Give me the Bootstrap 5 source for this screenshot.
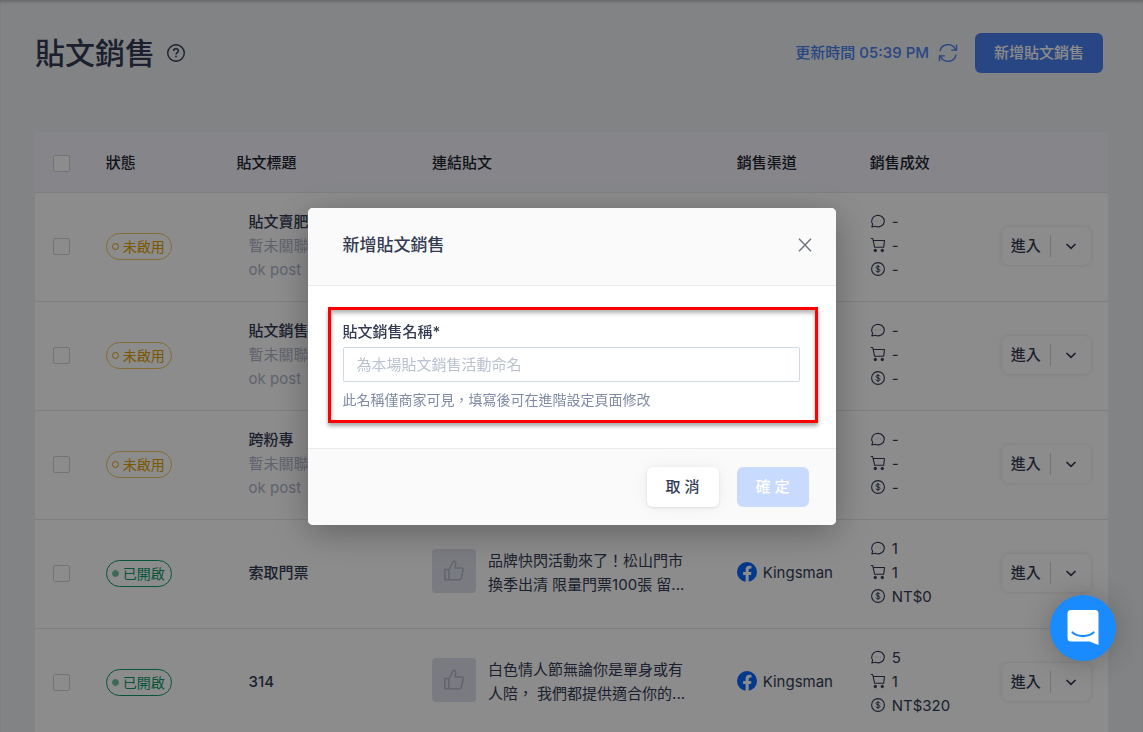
<!DOCTYPE html>
<html lang="zh-Hant">
<head>
<meta charset="utf-8">
<meta name="viewport" content="width=device-width, initial-scale=1">
<title>貼文銷售</title>
<link href="https://cdn.jsdelivr.net/npm/bootstrap@5.3.0/dist/css/bootstrap.min.css" rel="stylesheet">
<style>
  :root { --ink: #343b54; --line: #e6e8ec; --brand: #4a80ee; }
  body { font-family: Inter, "Noto Sans CJK TC", sans-serif; font-size: 15px; line-height: 24px; color: var(--ink); background: #edeef2; }
  button, input { font-family: inherit; }
  .app-page { padding: 0 35px; box-shadow: inset 0 3px 3px -1px rgba(0,0,0,.2); }
  .page-head { padding: 33px 5px 59px 0; }
  .page-title { font-size: 30px; line-height: 40px; font-weight: 500; }
  .title-group { gap: 11px; }
  .icon-btn { padding: 0; border: 0; background: none; line-height: 0; color: inherit; }
  .updated { color: var(--brand); font-weight: 500; }
  .btn { --bs-btn-font-size: 15px; --bs-btn-border-radius: 6px; line-height: 24px; }
  .btn-brand { --bs-btn-color: #fff; --bs-btn-bg: var(--brand); --bs-btn-disabled-color: #fff; --bs-btn-disabled-bg: #c8dbff; --bs-btn-disabled-opacity: 1; --bs-btn-padding-x: 19px; height: 40px; border: 0; font-weight: 500; }
  .sales-table { table-layout: fixed; --bs-table-bg: #fff; --bs-table-color: var(--ink); --bs-table-border-color: var(--line); }
  .sales-table > :not(caption) > * > * { padding: 17px 16px 19px; }
  .sales-table > :not(caption) > * > :first-child { padding-left: 18px; }
  .sales-table thead { vertical-align: middle; }
  .sales-table > thead > tr > th { --bs-table-bg: #f4f5fc; padding-top: 19px; padding-bottom: 17px; font-weight: 500; color: #20242f; }
  .sales-table > tbody > tr > .name-cell { padding-left: 28px; white-space: nowrap; font-weight: 500; }
  .name-cell .sub { color: #afb4c8; font-weight: 400; }
  .form-check-input.pick { display: block; width: 17px; height: 17px; margin: 0; border: 1px solid #d2d2d2; border-radius: 2px; }
  .state { display: inline-flex; align-items: center; gap: 4px; padding: 0 6px 0 5px; border: 1px solid; border-radius: 14px; font-size: 14px; line-height: 25px; vertical-align: middle; white-space: nowrap; }
  .state::before { content: ""; width: 7px; height: 7px; border: 1px solid; border-radius: 50%; }
  .state-off { color: #dfa000; border-color: #edc664; }
  .state-on { color: #0d9a6c; }
  .state-on::before { background: #6fc4a5; border-color: #6fc4a5; }
  .thumb { width: 44px; height: 44px; background: #dfe1ea; border-radius: 4px; color: #b4b9c9; }
  .stat { display: flex; align-items: center; gap: 6px; }
  .stat svg { margin-bottom: 2px; }
  .enter-group { height: 38px; border-radius: 7px; background: #fff; box-shadow: 0 0 4px rgba(0,0,0,.13); }
  .enter-group .btn { border: 0; padding: 0 9px; font-weight: 500; color: var(--ink); }
  .enter-group .split { height: 22px; border-left: 1px solid #d3d5db; }
  .enter-group .btn-more { padding: 0 14px; line-height: 0; }
  .modal-backdrop { --bs-backdrop-opacity: .45; }
  .modal-dialog { --bs-modal-width: 528px; }
  .modal-content { border: 0; border-radius: 5px; color: var(--ink); box-shadow: 0 8px 36px rgba(0,0,0,.3); }
  .modal-header { padding: 24px 24px 27px 35px; background: #fafafa; border-color: #ececee; border-radius: 5px 5px 0 0; }
  .modal-title { font-size: 17px; line-height: 26px; font-weight: 500; }
  .modal-body { padding: 21px 18px 25px 20px; }
  .modal-footer { padding: 18px 27px; gap: 18px; background: #fafafa; border-color: #ececee; border-radius: 0 0 5px 5px; }
  .modal-footer > * { margin: 0; }
  .modal-footer .btn { width: 72px; height: 40px; padding: 0; border: 0; font-weight: 500; }
  .btn-cancel { background: #fff; color: var(--ink); box-shadow: 0 1px 3px rgba(0,0,0,.1), 0 0 18px rgba(0,0,0,.05); }
  .callout { padding: 10px 15px 9px 12px; border: 3px solid #f00; box-shadow: 0 3px 4px rgba(0,0,0,.35), inset 0 3px 4px rgba(0,0,0,.3); }
  .callout .form-label { display: block; margin: 0 0 3px; font-weight: 500; }
  .callout .form-control { height: 35px; padding: 0 13px; font-size: 15px; border: 1px solid #cfdae4; border-radius: 2px; }
  .callout .form-control::placeholder { color: #bbc1d1; }
  .callout .form-text { margin-top: 7px; font-size: 14px; line-height: 22px; color: #818ba5; }
  .launcher { position: fixed; right: 27px; bottom: 71px; z-index: 1100; width: 66px; height: 66px; border: 0; border-radius: 50%; background: #1a8bff; box-shadow: 0 2px 28px rgba(0,0,0,.22); }
  svg { flex: none; fill: none; stroke: currentColor; }
</style>
</head>
<body class="modal-open vh-100 overflow-hidden">

<svg width="0" height="0" class="position-absolute" aria-hidden="true">
  <symbol id="i-chat" viewBox="0 0 16 16"><path d="M1.800 14 2.700 11.200A6.300 5.700 0 1 1 5.400 13.300Z" stroke-width="1.100" stroke-linejoin="round"/><path d="M5.200 8h.6M7.700 8h.6M10.200 8h.6" stroke-width=".6" opacity=".7"/></symbol>
  <symbol id="i-cart" viewBox="0 0 16 16"><path d="M.8 1.500h1.900L4.600 10.200H13.700L14.500 3.500H3.200" stroke-width="1.100" stroke-linejoin="round"/><circle cx="5.300" cy="13.500" r="1.200" fill="currentColor"/><circle cx="12.300" cy="13.500" r="1.200" fill="currentColor"/></symbol>
  <symbol id="i-coin" viewBox="0 0 16 16"><circle cx="8" cy="8" r="6.400" stroke-width="1.100"/><path d="M9.900 6.300C9.600 5.500 8.900 5.200 8 5.200c-1.100 0-1.900.5-1.900 1.300C6.100 8.400 10 7.400 10 9.400c0 .9-.9 1.400-2 1.400-1 0-1.800-.4-2.100-1.200M8 4.200v7.600" stroke-width="1"/></symbol>
  <symbol id="i-down" viewBox="0 0 12 12"><path d="m1.500 4 4.500 4.300L10.500 4" stroke-width="1.700"/></symbol>
  <symbol id="i-like" viewBox="0 0 24 24"><path d="M2.800 10.500h4v10.300h-4zM6.800 11 10 4.800c.4-1.500.9-2.400 2-2.400 1.400 0 1.900 1.200 1.700 2.500L13 9h6.200c1.300 0 2.200 1 1.900 2.300l-1.700 7.600c-.3 1.200-1 1.900-2.200 1.900H6.800" stroke-width="1.600" stroke-linejoin="round"/></symbol>
  <symbol id="i-fb" viewBox="0 0 20 20"><circle cx="10" cy="10" r="10" fill="#0866ff" stroke="none"/><path d="M8.600 20v-7.100H6.100V10h2.500V7.800c0-2.600 1.500-4 3.800-4 1.100 0 2.100.2 2.100.2v2.500h-1.200c-1.200 0-1.600.8-1.600 1.500v2h2.700l-.4 2.900h-2.300V20z" fill="#fff" stroke="none"/></symbol>
</svg>

<main class="app-page">
  <header class="page-head d-flex align-items-center justify-content-between">
    <div class="title-group d-flex align-items-center">
      <h1 class="page-title m-0">貼文銷售</h1>
      <button class="icon-btn" type="button" aria-label="說明">
        <svg width="20" height="20" viewBox="0 0 20 20"><circle cx="10" cy="10" r="8.300" stroke-width="1.400"/><path d="M7.600 8.100c0-1.400 1-2.300 2.400-2.300s2.400.9 2.400 2.100c0 1.700-2.400 1.800-2.400 3.600" stroke-width="1.400"/><path d="M10 12.700v1.600" stroke-width="1.600"/></svg>
      </button>
    </div>
    <div class="d-flex align-items-center">
      <span class="updated">更新時間 05:39 PM</span>
      <button class="icon-btn updated ms-2 me-3" type="button" aria-label="重新整理">
        <svg width="22" height="22" viewBox="0 0 22 22"><path d="M2.900 9.300A8.200 8.200 0 0 1 18.500 7.700M19.500 2.800v5.300h-5.300M19.100 12.700A8.200 8.200 0 0 1 3.500 14.300M2.500 19.200v-5.300h5.300" stroke-width="1.400"/></svg>
      </button>
      <button class="btn btn-brand" type="button">新增貼文銷售</button>
    </div>
  </header>

  <table class="table sales-table align-middle mb-0">
    <colgroup><col style="width:5.1%"><col style="width:12.2%"><col style="width:18.2%"><col style="width:28.4%"><col style="width:12.4%"><col style="width:12.3%"><col style="width:11.4%"></colgroup>
    <thead>
      <tr>
        <th scope="col"><input class="form-check-input pick" type="checkbox" aria-label="全選"></th>
        <th scope="col">狀態</th><th scope="col">貼文標題</th><th scope="col">連結貼文</th><th scope="col">銷售渠道</th><th scope="col">銷售成效</th><th scope="col"></th>
      </tr>
    </thead>
    <tbody>
      <tr>
        <td><input class="form-check-input pick" type="checkbox" aria-label="選取"></td>
        <td><span class="state state-off">未啟用</span></td>
        <td class="name-cell"><div>貼文賣肥皂</div><div class="sub">暫未關聯貼文</div><div class="sub">ok post</div></td>
        <td></td><td></td>
        <td><div class="stat"><svg width="16" height="16"><use href="#i-chat"/></svg>-</div><div class="stat"><svg width="16" height="16"><use href="#i-cart"/></svg>-</div><div class="stat"><svg width="16" height="16"><use href="#i-coin"/></svg>-</div></td>
        <td><div class="enter-group d-inline-flex align-items-center align-middle"><button class="btn text-nowrap" type="button">進入</button><span class="split"></span><button class="btn btn-more" type="button" aria-label="更多"><svg width="12" height="12"><use href="#i-down"/></svg></button></div></td>
      </tr>
      <tr>
        <td><input class="form-check-input pick" type="checkbox" aria-label="選取"></td>
        <td><span class="state state-off">未啟用</span></td>
        <td class="name-cell"><div>貼文銷售</div><div class="sub">暫未關聯貼文</div><div class="sub">ok post</div></td>
        <td></td><td></td>
        <td><div class="stat"><svg width="16" height="16"><use href="#i-chat"/></svg>-</div><div class="stat"><svg width="16" height="16"><use href="#i-cart"/></svg>-</div><div class="stat"><svg width="16" height="16"><use href="#i-coin"/></svg>-</div></td>
        <td><div class="enter-group d-inline-flex align-items-center align-middle"><button class="btn text-nowrap" type="button">進入</button><span class="split"></span><button class="btn btn-more" type="button" aria-label="更多"><svg width="12" height="12"><use href="#i-down"/></svg></button></div></td>
      </tr>
      <tr>
        <td><input class="form-check-input pick" type="checkbox" aria-label="選取"></td>
        <td><span class="state state-off">未啟用</span></td>
        <td class="name-cell"><div>跨粉專</div><div class="sub">暫未關聯貼文</div><div class="sub">ok post</div></td>
        <td></td><td></td>
        <td><div class="stat"><svg width="16" height="16"><use href="#i-chat"/></svg>-</div><div class="stat"><svg width="16" height="16"><use href="#i-cart"/></svg>-</div><div class="stat"><svg width="16" height="16"><use href="#i-coin"/></svg>-</div></td>
        <td><div class="enter-group d-inline-flex align-items-center align-middle"><button class="btn text-nowrap" type="button">進入</button><span class="split"></span><button class="btn btn-more" type="button" aria-label="更多"><svg width="12" height="12"><use href="#i-down"/></svg></button></div></td>
      </tr>
      <tr>
        <td><input class="form-check-input pick" type="checkbox" aria-label="選取"></td>
        <td><span class="state state-on">已開啟</span></td>
        <td class="name-cell">索取門票</td>
        <td><div class="d-flex align-items-start text-nowrap"><span class="thumb d-flex align-items-center justify-content-center me-2"><svg width="24" height="24"><use href="#i-like"/></svg></span><div class="ms-1">品牌快閃活動來了！松山門市<br>換季出清 限量門票100張 留...</div></div></td>
        <td><div class="stat"><svg width="20" height="20"><use href="#i-fb"/></svg>Kingsman</div></td>
        <td><div class="stat"><svg width="16" height="16"><use href="#i-chat"/></svg>1</div><div class="stat"><svg width="16" height="16"><use href="#i-cart"/></svg>1</div><div class="stat"><svg width="16" height="16"><use href="#i-coin"/></svg>NT$0</div></td>
        <td><div class="enter-group d-inline-flex align-items-center align-middle"><button class="btn text-nowrap" type="button">進入</button><span class="split"></span><button class="btn btn-more" type="button" aria-label="更多"><svg width="12" height="12"><use href="#i-down"/></svg></button></div></td>
      </tr>
      <tr>
        <td><input class="form-check-input pick" type="checkbox" aria-label="選取"></td>
        <td><span class="state state-on">已開啟</span></td>
        <td class="name-cell">314</td>
        <td><div class="d-flex align-items-start text-nowrap"><span class="thumb d-flex align-items-center justify-content-center me-2"><svg width="24" height="24"><use href="#i-like"/></svg></span><div class="ms-1">白色情人節無論你是單身或有<br>人陪， 我們都提供適合你的...</div></div></td>
        <td><div class="stat"><svg width="20" height="20"><use href="#i-fb"/></svg>Kingsman</div></td>
        <td><div class="stat"><svg width="16" height="16"><use href="#i-chat"/></svg>5</div><div class="stat"><svg width="16" height="16"><use href="#i-cart"/></svg>1</div><div class="stat"><svg width="16" height="16"><use href="#i-coin"/></svg>NT$320</div></td>
        <td><div class="enter-group d-inline-flex align-items-center align-middle"><button class="btn text-nowrap" type="button">進入</button><span class="split"></span><button class="btn btn-more" type="button" aria-label="更多"><svg width="12" height="12"><use href="#i-down"/></svg></button></div></td>
      </tr>
    </tbody>
  </table>
</main>

<div class="modal-backdrop show"></div>
<div class="modal show d-block" tabindex="-1" role="dialog" aria-modal="true" aria-labelledby="dialogTitle">
  <div class="modal-dialog modal-dialog-centered">
    <form class="modal-content">
      <div class="modal-header">
        <h2 class="modal-title" id="dialogTitle">新增貼文銷售</h2>
        <button class="icon-btn text-secondary" type="button" aria-label="關閉"><svg width="14" height="14" viewBox="0 0 14 14"><path d="m1 .7 12 12.600M13 .7 1 13.300" stroke-width="1.400"/></svg></button>
      </div>
      <div class="modal-body">
        <div class="callout">
          <label class="form-label" for="saleName">貼文銷售名稱*</label>
          <input class="form-control" id="saleName" type="text" placeholder="為本場貼文銷售活動命名" aria-describedby="saleHint">
          <div class="form-text" id="saleHint">此名稱僅商家可見，填寫後可在進階設定頁面修改</div>
        </div>
      </div>
      <div class="modal-footer">
        <button class="btn btn-cancel" type="button">取 消</button>
        <button class="btn btn-brand" type="submit" disabled>確 定</button>
      </div>
    </form>
  </div>
</div>

<button class="launcher d-flex align-items-center justify-content-center p-0" type="button" aria-label="開啟對話">
  <svg width="32" height="36" viewBox="0 0 32 36"><path d="M4 0h24a3.500 3.500 0 0 1 3.500 3.500V35l-9-3.500H4A3.500 3.500 0 0 1 .5 28V3.500A3.500 3.500 0 0 1 4 0z" fill="#fff" stroke="none"/><path d="M5.500 22.500c5.500 4.700 15.500 4.700 21 0" stroke="#1a8bff" stroke-width="2.200" stroke-linecap="round"/></svg>
</button>

<script src="https://cdn.jsdelivr.net/npm/bootstrap@5.3.0/dist/js/bootstrap.bundle.min.js"></script>
</body>
</html>
